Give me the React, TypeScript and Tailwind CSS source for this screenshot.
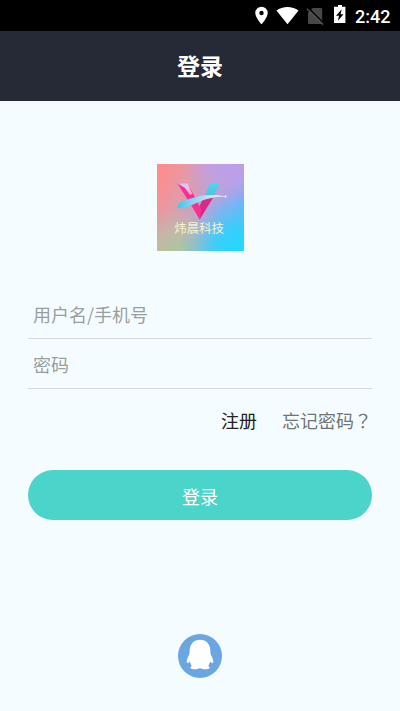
import React, { useState } from 'react';

const StatusBar: React.FC = () => (
  <div className="flex h-[31px] shrink-0 justify-end bg-black pr-[10px] text-white">
    <svg width="100" height="31" viewBox="0 0 100 31" fill="none">
      {/* location */}
      <path fill="#fff" fillRule="evenodd" d="M9.5 6.8a6.2 6.2 0 0 0-6.2 6.2c0 4.6 6.2 11.3 6.2 11.3s6.2-6.7 6.2-11.3a6.2 6.2 0 0 0-6.2-6.2Zm0 4a2.2 2.2 0 1 1 0 4.4 2.2 2.2 0 0 1 0-4.4Z" />
      {/* wifi */}
      <path fill="#fff" d="M24.4 10.6C30.5 5.7 40.500 5.7 46.600 10.600L35.500 24.300Z" />
      {/* no sim */}
      <path fill="#484848" d="M60.800 8h8.200a1.200 1.200 0 0 1 1.200 1.200v13.800a1 1 0 0 1-1 1H57.200a1.200 1.200 0 0 1-1.200-1.200V12.800Z" />
      <path stroke="#000" strokeWidth="1.400" d="M56.200 7.800 72 23.400" />
      <path stroke="#505050" strokeWidth="1.500" d="M54.900 8.700 71 24.600" />
      {/* battery */}
      <path fill="#fff" fillRule="evenodd" d="M86 5h4v1.800h3.400v16.200H82V6.800h4ZM89.700 9.200 84 15.800h3l-1 5 5.500-6.600h-3Z" />
    </svg>
    <span className="ml-[3px] w-[35px] whitespace-nowrap font-['Roboto',sans-serif] text-[18px] font-medium leading-[33px]">
      2:42
    </span>
  </div>
);

const Logo: React.FC = () => (
  <svg width="87" height="87" viewBox="0 0 87 87">
    <defs>
      <linearGradient id="base" x1="0" y1="0.2" x2="1" y2="0.7">
        <stop offset="0" stopColor="#fb8e8e" />
        <stop offset="0.3" stopColor="#e19cab" />
        <stop offset="0.6" stopColor="#b8a4d8" />
        <stop offset="0.8" stopColor="#80b0f4" />
        <stop offset="1" stopColor="#4fb8ff" />
      </linearGradient>
      <radialGradient id="violet" cx="0.85" cy="-0.05" r="0.55">
        <stop offset="0" stopColor="#bd9cf0" />
        <stop offset="0.5" stopColor="#bf9fe6" stopOpacity="0.8" />
        <stop offset="1" stopColor="#bf9fe0" stopOpacity="0" />
      </radialGradient>
      <radialGradient id="green" cx="0.25" cy="1.05" r="0.6">
        <stop offset="0" stopColor="#a4cc98" />
        <stop offset="0.5" stopColor="#bcc0a4" stopOpacity="0.7" />
        <stop offset="1" stopColor="#c0b0b0" stopOpacity="0" />
      </radialGradient>
      <radialGradient id="aqua" cx="0.95" cy="1.05" r="0.7">
        <stop offset="0" stopColor="#1edcff" />
        <stop offset="0.45" stopColor="#35d0fb" stopOpacity="0.9" />
        <stop offset="1" stopColor="#6cc0f0" stopOpacity="0" />
      </radialGradient>
      <linearGradient id="fold" x1="0" y1="0" x2="1" y2="1">
        <stop offset="0" stopColor="#a9d6f2" />
        <stop offset="0.5" stopColor="#e8c8ec" />
        <stop offset="1" stopColor="#f58cc4" />
      </linearGradient>
      <linearGradient id="arm" x1="0" y1="0" x2="0" y2="1">
        <stop offset="0" stopColor="#45dcee" />
        <stop offset="1" stopColor="#58b4dc" />
      </linearGradient>
      <linearGradient id="swoosh" x1="0" y1="0" x2="1" y2="0">
        <stop offset="0" stopColor="#35cdee" />
        <stop offset="0.4" stopColor="#9ad6f6" />
        <stop offset="1" stopColor="#f4f4ff" />
      </linearGradient>
    </defs>
    <rect width="87" height="87" fill="url(#base)" />
    <rect width="87" height="87" fill="url(#violet)" />
    <rect width="87" height="87" fill="url(#green)" />
    <rect width="87" height="87" fill="url(#aqua)" />
    <path fill="url(#arm)" d="M53 19.300h9.500L56 34l-9.500 1Z" />
    <path fill="#d42c86" d="M46.500 34H56L42.700 55.500 39.500 48Z" />
    <path fill="#fb2f90" d="m20.300 19.300 10.500.2L44.500 46l-1.800 9.500-8-13.500Z" />
    <path fill="url(#fold)" d="M20.300 19.300h10.500L35.500 30l-2.500 1-5-7Z" />
    <path fill="url(#swoosh)" d="M22.500 38.300C35 35 44 28 69 32.500 53 32.300 44 37 35 41 29 43.700 25 44.600 20 43.900Z" />
    <circle cx="68.500" cy="32.500" r="0.9" fill="#fff" />
    <text x="17.300" y="69" fill="#f8f2ca" fontSize="12.400" fontFamily="'Noto Sans CJK SC', sans-serif">
      炜晨科技
    </text>
  </svg>
);

const QQIcon: React.FC = () => (
  <svg width="44" height="44" viewBox="0 0 44 44">
    <circle cx="22" cy="22" r="22" fill="#69a6e2" />
    <path
      fill="#fff"
      d="M22 5.800c-6.200 0-10.300 4.600-10.300 10.800 0 1.700-.2 3-.6 4.200C9.700 23.400 8.700 25.600 8.700 27.800c0 1.600 1 1.800 3.200-.4.400 1.900 1 3.300 1.900 4.500-1.300.6-1.600 1.200-1.300 2 .4 1 3 1.300 5.200 1.300 1.800 0 3.100-.3 4.300-1.100 1.200.8 2.500 1.100 4.300 1.100 2.200 0 4.800-.3 5.200-1.300.3-.8 0-1.400-1.300-2 .9-1.200 1.500-2.600 1.900-4.500 2.200 2.200 3.200 2 3.200.4 0-2.200-1-4.400-2.400-7-.4-1.200-.6-2.500-.6-4.200C32.300 10.400 28.200 5.800 22 5.800Z"
    />
  </svg>
);

const inputClass =
  'block h-[50px] w-full border-b border-[#d4d9dc] bg-transparent px-[5px] text-[18px] text-[#333333] outline-none placeholder:text-[#999e9f] placeholder:opacity-100';

const App: React.FC = () => {
  const [username, setUsername] = useState('');
  const [password, setPassword] = useState('');

  const handleSubmit = (e: React.FormEvent) => {
    e.preventDefault();
  };

  return (
    <div className="flex h-[711px] w-[400px] flex-col overflow-hidden bg-[#f5fcff] font-['Noto_Sans_CJK_SC',sans-serif]">
      <StatusBar />
      <header className="flex h-[70px] shrink-0 items-center justify-center bg-[#262a36] pb-[2px]">
        <h1 className="text-[23px] font-bold text-white">登录</h1>
      </header>

      <main className="flex flex-1 flex-col items-center px-7 pt-[63px]">
        <Logo />

        <form onSubmit={handleSubmit} className="mt-[38px] w-full">
          <input
            type="text"
            value={username}
            onChange={(e) => setUsername(e.target.value)}
            className={inputClass}
            placeholder="用户名/手机号"
          />
          <input
            type="password"
            value={password}
            onChange={(e) => setPassword(e.target.value)}
            className={inputClass}
            placeholder="密码"
          />

          <div className="mt-[17px] flex h-7 items-center justify-end gap-[25px] text-[18px]">
            <button type="button" className="text-[#222222]">注册</button>
            <button type="button" className="text-[#707475]">
              忘记密码<span className="font-['Noto_Sans_CJK_TC',sans-serif]" lang="zh-TW">？</span>
            </button>
          </div>

          <button
            type="submit"
            className="mt-9 h-[50px] w-full rounded-full bg-[#4bd4ca] pt-[2px] text-[18px] text-white"
          >
            登录
          </button>
        </form>

        <button type="button" className="mt-auto mb-[33px]">
          <QQIcon />
        </button>
      </main>
    </div>
  );
};

export default App;
